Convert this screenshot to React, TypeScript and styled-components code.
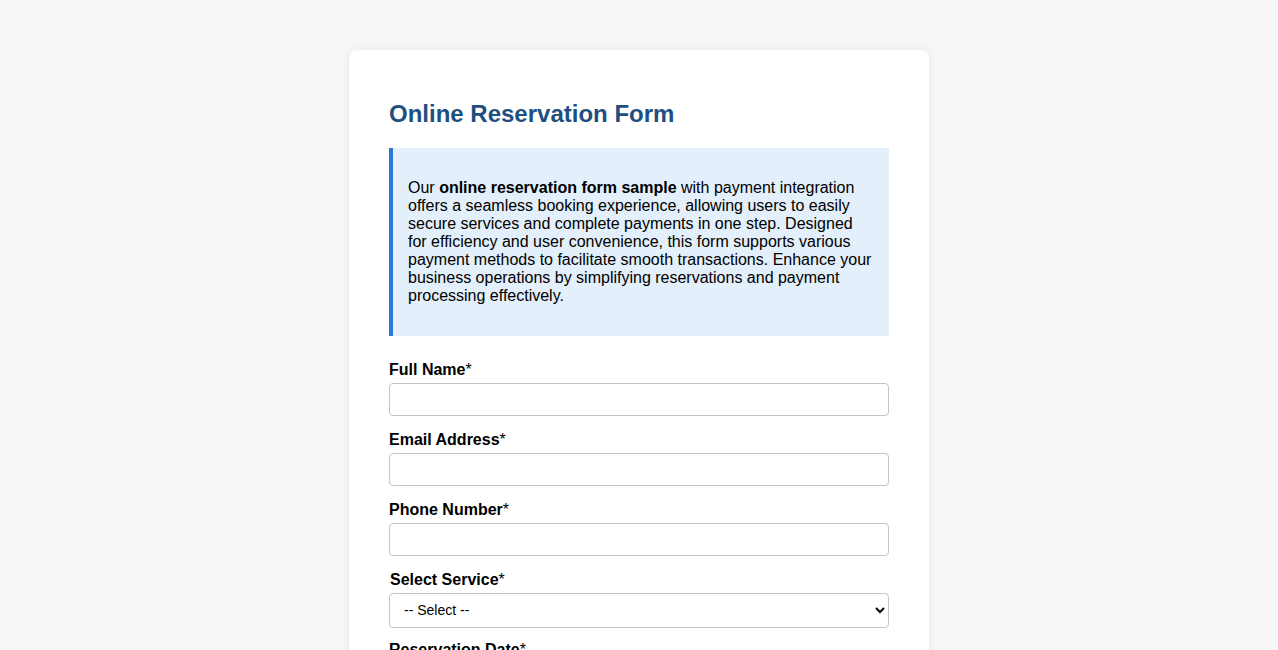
import styled, { createGlobalStyle } from "styled-components"

const GlobalStyle = createGlobalStyle`
  html, body {
    margin: 0;
    padding: 0;
    background: #f7f7f7;
    font-family: "Liberation Sans", Arial, sans-serif;
    color: #000;
  }
  * {
    box-sizing: border-box;
  }
`

const fields = [
  { id: "fullName", label: "Full Name", type: "text" },
  { id: "email", label: "Email Address", type: "email" },
  { id: "phone", label: "Phone Number", type: "tel" },
]

const App = () => {
  return (
    <>
      <GlobalStyle />
      <StyledPage>
        <StyledCard>
          <StyledTitle>Online Reservation Form</StyledTitle>

          <StyledIntro>
            <p>
              Our <strong>online reservation form sample</strong> with payment
              integration offers a seamless booking experience, allowing users
              to easily secure services and complete payments in one step.
              Designed for efficiency and user convenience, this form supports
              various payment methods to facilitate smooth transactions.
              Enhance your business operations by simplifying reservations and
              payment processing effectively.
            </p>
          </StyledIntro>

          <form onSubmit={(e) => e.preventDefault()}>
            {fields.map((field) => (
              <StyledGroup key={field.id}>
                <StyledLabel htmlFor={field.id}>
                  {field.label}
                  <StyledStar>*</StyledStar>
                </StyledLabel>
                <StyledInput id={field.id} type={field.type} />
              </StyledGroup>
            ))}

            <StyledGroup $tight>
              <StyledLabel htmlFor="service" $offset>
                Select Service<StyledStar>*</StyledStar>
              </StyledLabel>
              <StyledSelect id="service" defaultValue="">
                <option value="">-- Select --</option>
                <option value="consultation">Consultation</option>
                <option value="booking">Room Booking</option>
                <option value="event">Event Reservation</option>
              </StyledSelect>
            </StyledGroup>

            <StyledGroup>
              <StyledLabel htmlFor="date">
                Reservation Date<StyledStar>*</StyledStar>
              </StyledLabel>
              <StyledInput id="date" type="date" />
            </StyledGroup>

            <StyledGroup>
              <StyledLabel htmlFor="time">
                Reservation Time<StyledStar>*</StyledStar>
              </StyledLabel>
              <StyledInput id="time" type="time" />
            </StyledGroup>
          </form>
        </StyledCard>
      </StyledPage>
    </>
  )
}

const StyledPage = styled.div`
  display: flex;
  justify-content: center;
  padding: 50px 20px 40px;
`

const StyledCard = styled.div`
  width: 580px;
  background: #fff;
  border-radius: 8px;
  box-shadow: 0 0 10px rgba(0, 0, 0, 0.08);
  padding: 30px 40px 40px;
`

const StyledTitle = styled.h2`
  margin: 20px 0;
  font-size: 24px;
  line-height: 28px;
  font-weight: 700;
  color: #1f4f7f;
`

const StyledIntro = styled.div`
  background: #e3effa;
  border-left: 4px solid #2a78d6;
  padding: 15px;
  margin-bottom: 24px;

  p {
    margin: 16px 0;
    font-size: 16px;
    line-height: 18px;
  }

  strong {
    font-weight: 700;
  }
`

const StyledGroup = styled.div<{ $tight?: boolean }>`
  display: flex;
  flex-direction: column;
  gap: 4px;
  margin-bottom: ${({ $tight }) => ($tight ? "12px" : "14px")};
`

const StyledLabel = styled.label<{ $offset?: boolean }>`
  font-size: 16px;
  line-height: 18px;
  font-weight: 700;
  padding-top: 1px;
  padding-left: ${({ $offset }) => ($offset ? "1px" : "0")};
`

const StyledStar = styled.span`
  font-weight: 400;
`

const StyledInput = styled.input`
  width: 100%;
  height: 33px;
  padding: 6px 10px;
  border: 1px solid #c4c4c4;
  border-radius: 4px;
  font-family: "Liberation Sans", Arial, sans-serif;
  font-size: 14px;
  background: #fff;
`

const StyledSelect = styled.select`
  width: 100%;
  height: 35px;
  padding: 5px 10px 7px;
  border: 1px solid #c4c4c4;
  border-radius: 4px;
  font-family: "Liberation Sans", Arial, sans-serif;
  font-size: 14px;
  color: #000;
  background: #fff;
`

export default App
